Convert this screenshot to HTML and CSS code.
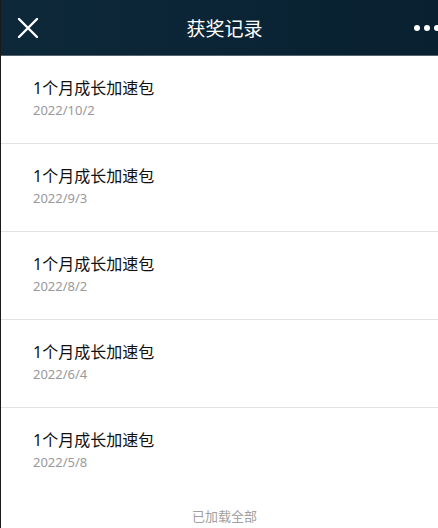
FILE: index.html
```html
<!DOCTYPE html>
<html lang="zh-CN">
  <head>
    <meta charset="UTF-8">
    <meta name="viewport" content="width=device-width, initial-scale=1.0">
    <title>获奖记录</title>
    <link rel="stylesheet" href="styles.css">
  </head>
<body>
  <header class="topbar">
    <span class="close">
      <svg width="22" height="22" viewBox="0 0 22 22">
        <path d="M2 2 L20 20 M20 2 L2 20" stroke="#fff" stroke-width="2.4" stroke-linecap="round"/>
      </svg>
    </span>
    <h1 class="title">获奖记录</h1>
    <span class="more"><i></i><i></i><i></i></span>
  </header>

  <ul class="records">
    <li class="record">
      <div class="record-name">1个月成长加速包</div>
      <div class="record-date">2022/10/2</div>
    </li>
    <li class="record">
      <div class="record-name">1个月成长加速包</div>
      <div class="record-date">2022/9/3</div>
    </li>
    <li class="record">
      <div class="record-name">1个月成长加速包</div>
      <div class="record-date">2022/8/2</div>
    </li>
    <li class="record">
      <div class="record-name">1个月成长加速包</div>
      <div class="record-date">2022/6/4</div>
    </li>
    <li class="record">
      <div class="record-name">1个月成长加速包</div>
      <div class="record-date">2022/5/8</div>
    </li>
  </ul>

  <p class="end">已加载全部</p>
</body>
</html>
```

FILE: styles.css
```css
html, body {
  margin: 0;
  padding: 0;
}

body {
  font-family: 'Noto Sans', 'Noto Sans CJK SC', sans-serif;
  background: #fff;
  border-left: 1px solid #1a1a1a;
  min-height: 528px;
  box-sizing: border-box;
  color: #111;
}

.topbar {
  height: 55px;
  display: flex;
  align-items: center;
  justify-content: space-between;
  padding: 0 0 0 16px;
  background: linear-gradient(to right, #0d2839, #0b2536 50%, #08202f);
  border-bottom: 1px solid #56646e;
  position: relative;
}

.close {
  display: flex;
  width: 22px;
  height: 22px;
}

.title {
  position: absolute;
  left: 0;
  right: 0;
  margin: 0;
  padding-left: 10px;
  text-align: center;
  font-size: 19px;
  font-weight: 400;
  color: #fff;
  pointer-events: none;
}

.more {
  display: flex;
  gap: 4px;
  margin-right: -2px;
}

.more i {
  display: block;
  width: 6px;
  height: 6px;
  border-radius: 50%;
  background: #fff;
}

.records {
  list-style: none;
  margin: 0;
  padding: 0;
}

.record {
  padding: 21px 32px 24px;
  border-bottom: 1px solid #e3e3e3;
}

.record:last-child {
  border-bottom: none;
}

.record-name {
  font-size: 16px;
  line-height: 22px;
  color: #111;
}

.record-date {
  margin-top: 2px;
  font-size: 13px;
  line-height: 18px;
  color: #999;
}

.end {
  margin: 0;
  padding: 12px 0 0 10px;
  text-align: center;
  font-size: 13px;
  line-height: 18px;
  color: #a0a0a0;
}
```
